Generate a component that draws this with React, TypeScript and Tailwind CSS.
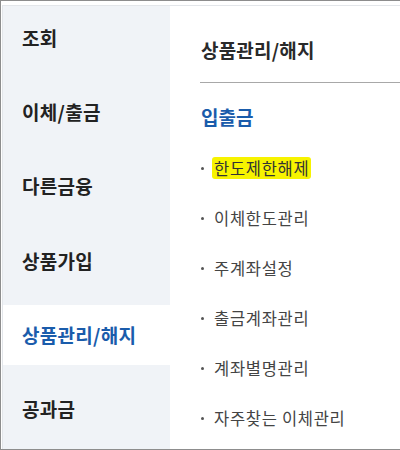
import React from "react";

const side = ["조회", "이체/출금", "다른금융", "상품가입", "상품관리/해지", "공과금"];
const items = ["한도제한해제", "이체한도관리", "주계좌설정", "출금계좌관리", "계좌별명관리", "자주찾는 이체관리"];

export default function App() {
  return (
    <div
      className="w-[400px] h-[450px] overflow-hidden bg-white border-t border-l border-b border-[#8d8d8d] pt-[4px] pl-[1px]"
      style={{ fontFamily: '"Noto Sans CJK KR", "Noto Sans", sans-serif' }}
    >
      <div className="flex h-full border-t border-l border-[#e3e6ea]">
        <div className="w-[167px] shrink-0 bg-[#f0f3f7] flex flex-col pt-[1px] gap-[14.4px]">
          {side.map((s) => {
            const active = s === "상품관리/해지";
            return (
              <div
                key={s}
                className={
                  "h-[60px] shrink-0 flex items-center pl-[19px] text-[19px] font-bold leading-[25px] tracking-[0.3px] " +
                  (active ? "bg-white text-[#1a5cab]" : "text-[#222222]")
                }
              >
                {s}
              </div>
            );
          })}
        </div>
        <div className="flex-1 pl-[30px]">
          <div className="border-b border-[#a8a8a8] pt-[31px] pb-[20px] text-[19px] font-bold leading-[25px] tracking-[0.2px] text-[#2a2a2a] pl-[1px]">
            상품관리/해지
          </div>
          <div className="mt-[21px] pl-[1px] text-[19px] font-bold leading-[25px] text-[#1a5cab]">입출금</div>
          <div className="mt-[14px] flex flex-col">
            {items.map((t, i) => (
              <div key={t} className="h-[50px] flex items-center text-[16.5px] text-[#444444]">
                <span className="ml-[1px] w-[3px] h-[3px] rounded-full bg-[#555555] mr-[8px]" />
                <span
                  className={
                    "leading-[22px] tracking-[0.7px] " + (i === 0 ? "bg-[#f7f300] rounded-[3px] px-[2px] text-[#333]" : "px-[2px]")
                  }
                >
                  {t}
                </span>
              </div>
            ))}
          </div>
        </div>
      </div>
    </div>
  );
}
